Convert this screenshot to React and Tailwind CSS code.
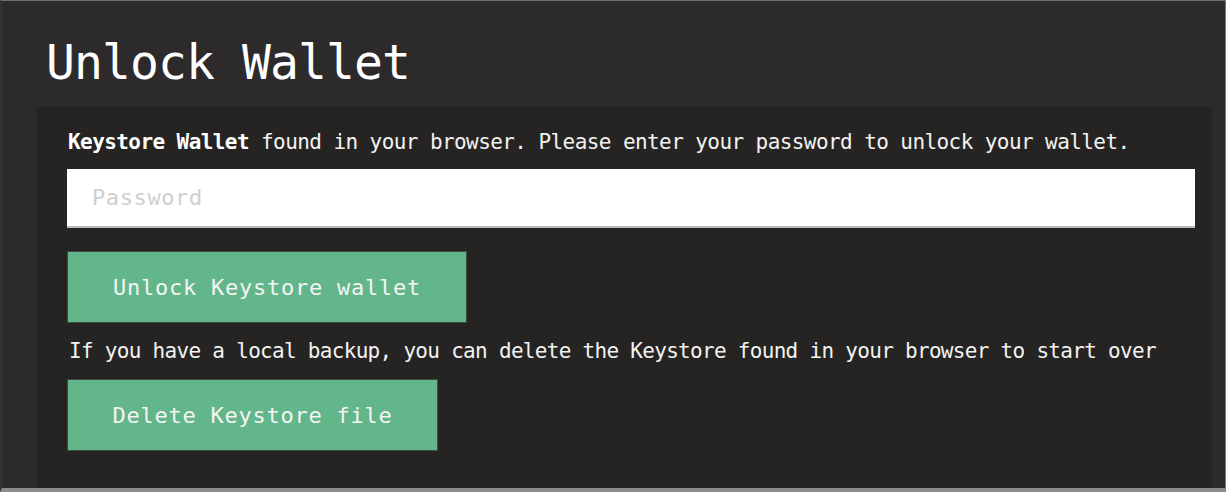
export default function App() {
  const mono = { fontFamily: '"DejaVu Sans Mono", "Liberation Mono", monospace' };
  return (
    <div
      className="w-[1226px] h-[492px] flex flex-col bg-[#2c2a2b] border-t border-t-[#6e6e6e] border-r border-r-[#7a7a7a] border-b-[4px] border-b-[#8c8c8c] border-l-[2px] border-l-[#343233] pl-[35px] pr-[13px] pt-[37px] overflow-hidden"
      style={mono}
    >
      <h1 className="ml-[9px] text-[48px] leading-[48px] text-white font-normal tracking-[-0.9px]">
        Unlock Wallet
      </h1>
      <div className="mt-[21px] flex-1 bg-[#252423] pl-[30px] pt-[20px] flex flex-col items-start">
        <p className="ml-[1px] text-[21px] leading-[30px] tracking-[-0.58px] text-[#f2f2f2]">
          <span className="font-bold text-white">Keystore Wallet</span> found in your browser. Please enter your password to unlock your wallet.
        </p>
        <input
          type="password"
          placeholder="Password"
          className="mt-[12px] w-[1128px] h-[59px] bg-white border-b-2 border-b-[#bdbdbd] pl-[25px] text-[22px] tracking-[0.6px] text-[#333] placeholder:text-[#cfcfcf] outline-none"
          style={mono}
        />
        <button
          className="mt-[23px] w-[400px] h-[72px] bg-[#63b68a] border border-[#3f4a43] text-[22px] tracking-[0.75px] text-[#f4f4f4] text-center"
          style={mono}
        >
          Unlock Keystore wallet
        </button>
        <p className="ml-[2px] mt-[13px] text-[21px] leading-[30px] tracking-[-0.7px] text-[#f2f2f2]">
          If you have a local backup, you can delete the Keystore found in your browser to start over
        </p>
        <button
          className="mt-[13px] w-[371px] h-[72px] bg-[#63b68a] border border-[#3f4a43] text-[22px] tracking-[0.75px] text-[#f4f4f4] text-center"
          style={mono}
        >
          Delete Keystore file
        </button>
      </div>
    </div>
  );
}
